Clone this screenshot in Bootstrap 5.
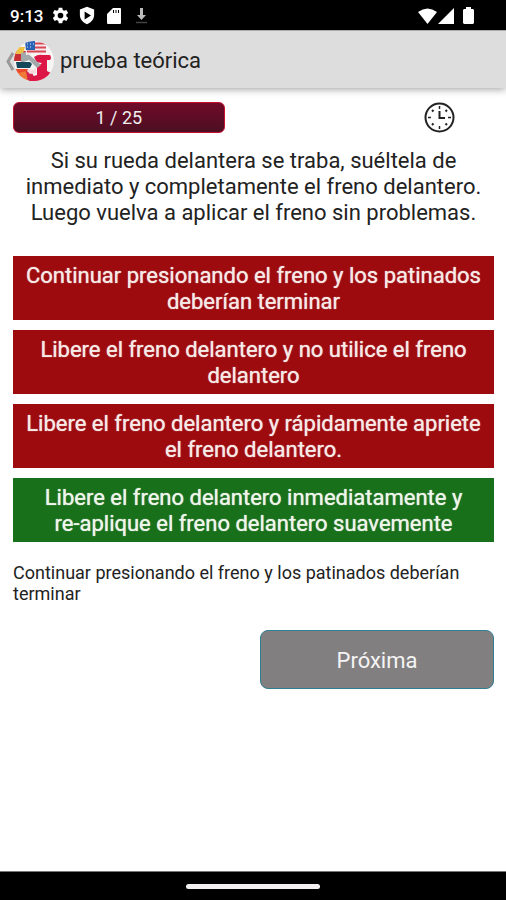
<!DOCTYPE html>
<html lang="es">
<head>
<meta charset="utf-8">
<meta name="viewport" content="width=device-width, initial-scale=1">
<title>prueba teórica</title>
<link href="https://cdn.jsdelivr.net/npm/bootstrap@5.3.0/dist/css/bootstrap.min.css" rel="stylesheet">
<style>
body { font-family: Roboto, "Liberation Sans", sans-serif; color: #222; background: #fff; }
svg { display: block; flex: none; }
.status-bar { height: 30px; background: #000; color: #fff; font-size: 17px; line-height: 20px; font-weight: 500; padding: 1px 32px 0 10px; }
.status-icons { gap: 8px; margin-left: 9px; }
.app-bar { height: 58px; background: #ddd; border-top: 1px solid #aaa; box-shadow: 0 1px 8px rgba(0,0,0,.4); padding: 2px 0 0 5px; }
.app-title { font-size: 22px; line-height: 28px; color: #222; margin-left: 5px; }
.screen { padding: 14px 12px 0 13px; }
.counter { width: 44%; height: 31px; border: 1px solid #c8102e; border-radius: 6px; background: linear-gradient(#700a28, #4c0f22); color: #eee; font-size: 18px; line-height: 30px; }
.clock-cell { padding-right: 39px; }
.question { font-size: 22px; line-height: 26px; margin: 15px 0 30px; }
.answers { gap: 10px; }
.answer { --bs-btn-color: #f6e9e6; --bs-btn-bg: #9d0b0f; --bs-btn-border-color: #9d0b0f; --bs-btn-hover-bg: #8a0a0d; --bs-btn-hover-color: #fff; font-size: 22px; line-height: 26px; padding: 6px 8px 4px; min-height: 64px; text-shadow: 0 0 1px currentColor; }
.answer-right { --bs-btn-bg: #18701a; --bs-btn-border-color: #18701a; --bs-btn-hover-bg: #145f16; --bs-btn-color: #eef5ea; }
.hint { font-size: 18px; line-height: 21px; margin: 20px 0 26px; }
.next { --bs-btn-color: #f4f4f4; --bs-btn-bg: #827f80; --bs-btn-border-color: #2f7f93; --bs-btn-hover-bg: #737071; --bs-btn-hover-color: #fff; width: 234px; height: 59px; border-radius: 8px; font-size: 22px; line-height: 26px; padding-top: 8px; }
.home-bar { height: 29px; background: #000; border-top: 1px solid #777; }
.home-pill { width: 134px; height: 5px; background: #f2f0f0; }
</style>
<script src="https://cdn.jsdelivr.net/npm/bootstrap@5.3.0/dist/js/bootstrap.bundle.min.js"></script>
</head>
<body class="d-flex flex-column min-vh-100">
<div class="status-bar d-flex align-items-center">
  <span>9:13</span>
  <div class="status-icons d-flex align-items-center">
  <svg width="17" height="17" viewBox="0 0 24 24" fill="#fff" aria-hidden="true"><path fill-rule="evenodd" d="M9.500 1h5l.6 3.300 2 1.100 3.200-1.200 2.500 4.300-2.600 2.200v2.500l2.600 2.200-2.500 4.300-3.200-1.200-2 1.100-.6 3.400h-5l-.6-3.400-2-1.100-3.200 1.200-2.500-4.300 2.600-2.200v-2.500L1.200 8.500l2.500-4.300 3.200 1.200 2-1.100zM12 8a4 4 0 1 0 0 8 4 4 0 0 0 0-8z"/></svg>
  <svg width="20" height="19" viewBox="0 0 24 24" fill="#fff" aria-hidden="true"><path fill-rule="evenodd" d="M12 1l9 3.500v7c0 5.500-4 9.500-9 11.500-5-2-9-6-9-11.500v-7zM9 7v10l8-5z"/></svg>
  <svg width="18" height="18" viewBox="0 0 18 18" fill="#fff" aria-hidden="true"><path fill-rule="evenodd" d="M8 1h7q1 0 1 1v14q0 1-1 1H3q-1 0-1-1V7zM8 3v3h1V3zM10.500 3v3h1V3zM13 3v3h1V3z"/></svg>
  <svg class="ms-1" width="13" height="18" viewBox="0 0 13 18" aria-hidden="true"><path d="M5 1h3v7h3l-4.500 5L2 8h3z" fill="#bbb"/><path d="M1 15.500h11" stroke="#444" stroke-width="1.500"/></svg>
  </div>
  <svg class="ms-auto" width="19" height="18" viewBox="0 0 19 18" fill="#fff" aria-hidden="true"><path d="M0 5Q9.500-2 19 5L9.500 17z"/></svg>
  <svg width="18" height="18" viewBox="0 0 18 18" fill="#fff" aria-hidden="true"><path d="M17 1v16H1z"/></svg>
  <svg class="ms-2" width="11" height="18" viewBox="0 0 11 18" fill="#fff" aria-hidden="true"><path d="M3 0h5v2h2l1 1v13l-1 1H1l-1-1V3l1-1h2z"/></svg>
</div>
<header class="app-bar d-flex align-items-center">
  <svg width="50" height="42" viewBox="0 0 50 42" role="img" aria-label="Atrás">
    <defs><clipPath id="disc"><circle cx="29" cy="21" r="20"/></clipPath></defs>
    <path d="M8 13L3 21.500 8 30" fill="none" stroke="#999" stroke-width="3"/>
    <g clip-path="url(#disc)">
      <path d="M8 0h42v42H8z" fill="#f7f4f4"/>
      <path d="M8 11h13v10H8z" fill="#c92e32"/><path d="M10 7h10l-2 7h-9z" fill="#eebf45"/>
      <path d="M8 29h16l2 7 6 6H8z" fill="#e94a2c"/>
      <path d="M13 33l10-2 9 11H17z" fill="#f07a35"/>
      <path d="M21 31h5l6 11H23z" fill="#d3234a"/>
      <path d="M29 17q4-3 9-2h7q2 3 0 5h-3v11l4 2v9H24l2-5 6-2V23z" fill="#dd1745"/>
      <path d="M25 34l6-1V22l-6 3-3 6z" fill="#f8dadd"/>
      <path d="M22 15l8 7 7 1-9 7-10-2z" fill="#f3f3f3"/>
      <path d="M16 13l5-1 15 13-4 3-8-8-8 3z" fill="#a3a8aa"/>
      <path d="M20 2h21v13l-10-2-10 2z" fill="#f7e9ec"/>
      <path d="M29 3.500h12M30 7.500h11M22 11.500h19" stroke="#d84754" stroke-width="2"/>
      <path d="M20 1h10v9h-9z" fill="#2862b5"/><path d="M22 4h7M22 7h6" stroke="#dbe8fb" stroke-dasharray="1 2"/>
    </g>
    <path d="M11 22h14l2 2-2 4H12z" fill="#124859"/>
  </svg>
  <h1 class="app-title mb-0 fw-normal">prueba teórica</h1>
</header>
<main class="screen flex-grow-1">
  <div class="d-flex align-items-center justify-content-between">
    <div class="counter text-center">1 / 25</div>
    <div class="clock-cell">
      <svg width="31" height="31" viewBox="0 0 31 31" fill="none" stroke="#222" role="img" aria-label="Tiempo"><circle cx="15.500" cy="15.500" r="14" stroke-width="2"/><path d="M15.500 9v7H21" stroke-width="2"/><path d="M15.500 4v3M15.500 24v3M4 15.500h3M24 15.500h3" stroke-width="1.500"/><path d="M8 8l1.500 1.500M23 8l-1.500 1.500M8 23l1.500-1.500M23 23l-1.500-1.500" stroke-width="2"/></svg>
    </div>
  </div>
  <p class="question text-center">Si su rueda delantera se traba, suéltela de inmediato y completamente el freno delantero. Luego vuelva a aplicar el freno sin problemas.</p>
  <div class="answers d-grid">
    <button type="button" class="btn answer rounded-0">Continuar presionando el freno y los patinados deberían terminar</button>
    <button type="button" class="btn answer rounded-0">Libere el freno delantero y no utilice el freno delantero</button>
    <button type="button" class="btn answer rounded-0">Libere el freno delantero y rápidamente apriete el freno delantero.</button>
    <button type="button" class="btn answer answer-right rounded-0">Libere el freno delantero inmediatamente y<br>re-aplique el freno delantero suavemente</button>
  </div>
  <p class="hint">Continuar presionando el freno y los patinados deberían terminar</p>
  <div class="d-flex justify-content-end">
    <button type="button" class="btn next">Próxima</button>
  </div>
</main>
<div class="home-bar d-flex align-items-center justify-content-center"><div class="home-pill rounded-pill"></div></div>
</body>
</html>
